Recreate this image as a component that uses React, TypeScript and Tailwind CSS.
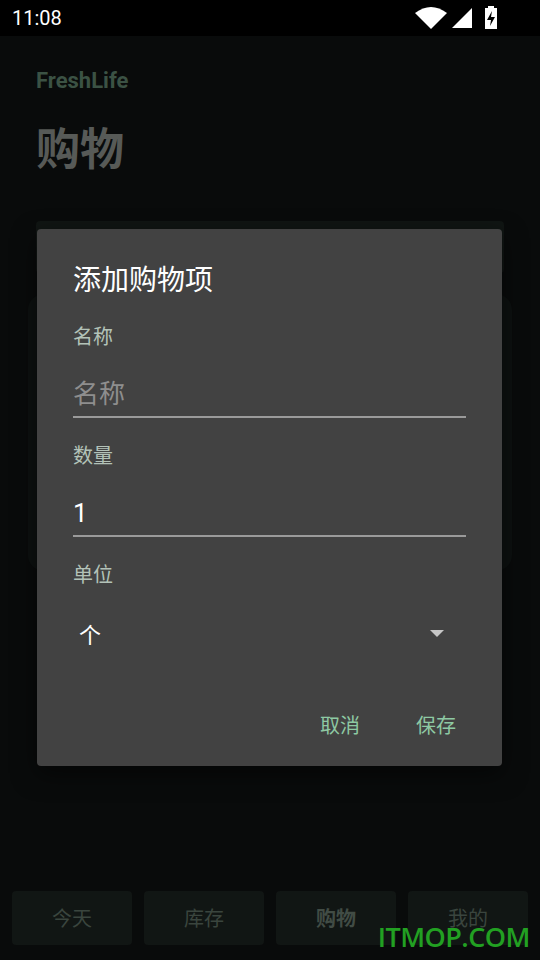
import React from "react";

const font = { fontFamily: '"Noto Sans CJK SC", Roboto, sans-serif' };

function StatusBar() {
  return (
    <div className="h-[36px] bg-black flex items-center justify-between pl-[12px] pr-[42px]">
      <span className="text-white text-[20px] font-['Roboto',sans-serif] leading-none">11:08</span>
      <div className="flex items-center gap-[4px]">
        <svg width="34" height="22" viewBox="0 0 34 22">
          <path d="M1 6 Q17 -6 33 6 L17 22 Z" fill="#fff" />
        </svg>
        <svg width="20" height="20" viewBox="0 0 20 20">
          <path d="M20 0 L20 20 L0 20 Z" fill="#fff" />
        </svg>
        <svg width="14" height="24" viewBox="0 0 14 24" className="ml-[8px]">
          <rect x="4" y="0" width="6" height="3" fill="#fff" />
          <rect x="1" y="2" width="12" height="21" fill="#fff" />
          <path d="M8 5 L3 14 L7 14 L6 20 L11 11 L7 11 Z" fill="#000" />
        </svg>
      </div>
    </div>
  );
}

function Field({ label, value, placeholder }: { label: string; value?: string; placeholder?: string }) {
  return (
    <div className="flex flex-col">
      <span className="text-[20px] text-[#b3c2b8] leading-[28px]">{label}</span>
      <div className="mt-[24px] h-[36px] flex items-center">
        {value ? (
          <span className="text-[26px] text-white leading-none font-['Roboto',sans-serif] pt-[4px]">{value}</span>
        ) : (
          <span className="text-[26px] text-[#8e8e8e] leading-none">{placeholder}</span>
        )}
      </div>
      <div className="mt-[6px] h-[2px] bg-[#9a9a9a]" />
    </div>
  );
}

export default function App() {
  const tabs = ["今天", "库存", "购物", "我的"];
  return (
    <div className="relative w-[540px] h-[960px] bg-[#090b0b] overflow-hidden flex flex-col" style={font}>
      <StatusBar />
      <div className="flex-1 flex flex-col px-[36px]">
        <div className="mt-[34px] text-[22px] font-bold text-[#3b5244] font-['Roboto',sans-serif] leading-none">FreshLife</div>
        <div className="mt-[32px] text-[44px] font-bold text-[#575a57] leading-none">购物</div>
        <div className="mt-[53px] h-[52px] rounded-[4px] bg-[#101513]" />
        <div className="mt-[21px] -mx-[8px] h-[277px] rounded-[16px] bg-[#0d1110]" />
      </div>
      <div className="h-[69px] flex gap-[12px] px-[12px] pb-[15px]">
        {tabs.map((t) => (
          <div
            key={t}
            className={`flex-1 h-[54px] rounded-[4px] bg-[#111614] flex items-center justify-center text-[20px] ${
              t === "购物" ? "font-bold text-[#414c45]" : "text-[#3a453e]"
            }`}
          >
            {t}
          </div>
        ))}
      </div>

      <div className="absolute left-[37px] top-[229px] w-[465px] h-[537px] bg-[#424242] rounded-[4px] shadow-[0_8px_24px_rgba(0,0,0,0.5)] flex flex-col px-[36px]">
        <div className="mt-[29px] text-[28px] text-white leading-[40px]">添加购物项</div>
        <div className="mt-[24px] flex flex-col gap-[23px] w-[393px]">
          <Field label="名称" placeholder="名称" />
          <Field label="数量" value="1" />
          <div className="flex flex-col">
            <span className="text-[20px] text-[#b3c2b8] leading-[28px]">单位</span>
            <div className="mt-[30px] h-[30px] flex items-center justify-between pl-[6px] pr-[22px]">
              <span className="text-[22px] text-white leading-none">个</span>
              <svg width="14" height="7" viewBox="0 0 14 7">
                <path d="M0 0 L14 0 L7 7 Z" fill="#c6c6c6" />
              </svg>
            </div>
          </div>
        </div>
        <div className="mt-[62px] flex justify-end gap-[56px] pr-[10px] text-[20px] text-[#8ec9a3]">
          <span>取消</span>
          <span>保存</span>
        </div>
      </div>

      <div className="absolute right-[10px] bottom-[10px] text-[27px] font-semibold text-[#22a022] font-['Open_Sans',sans-serif] leading-none tracking-[-0.5px]">
        ITMOP.COM
      </div>
    </div>
  );
}
